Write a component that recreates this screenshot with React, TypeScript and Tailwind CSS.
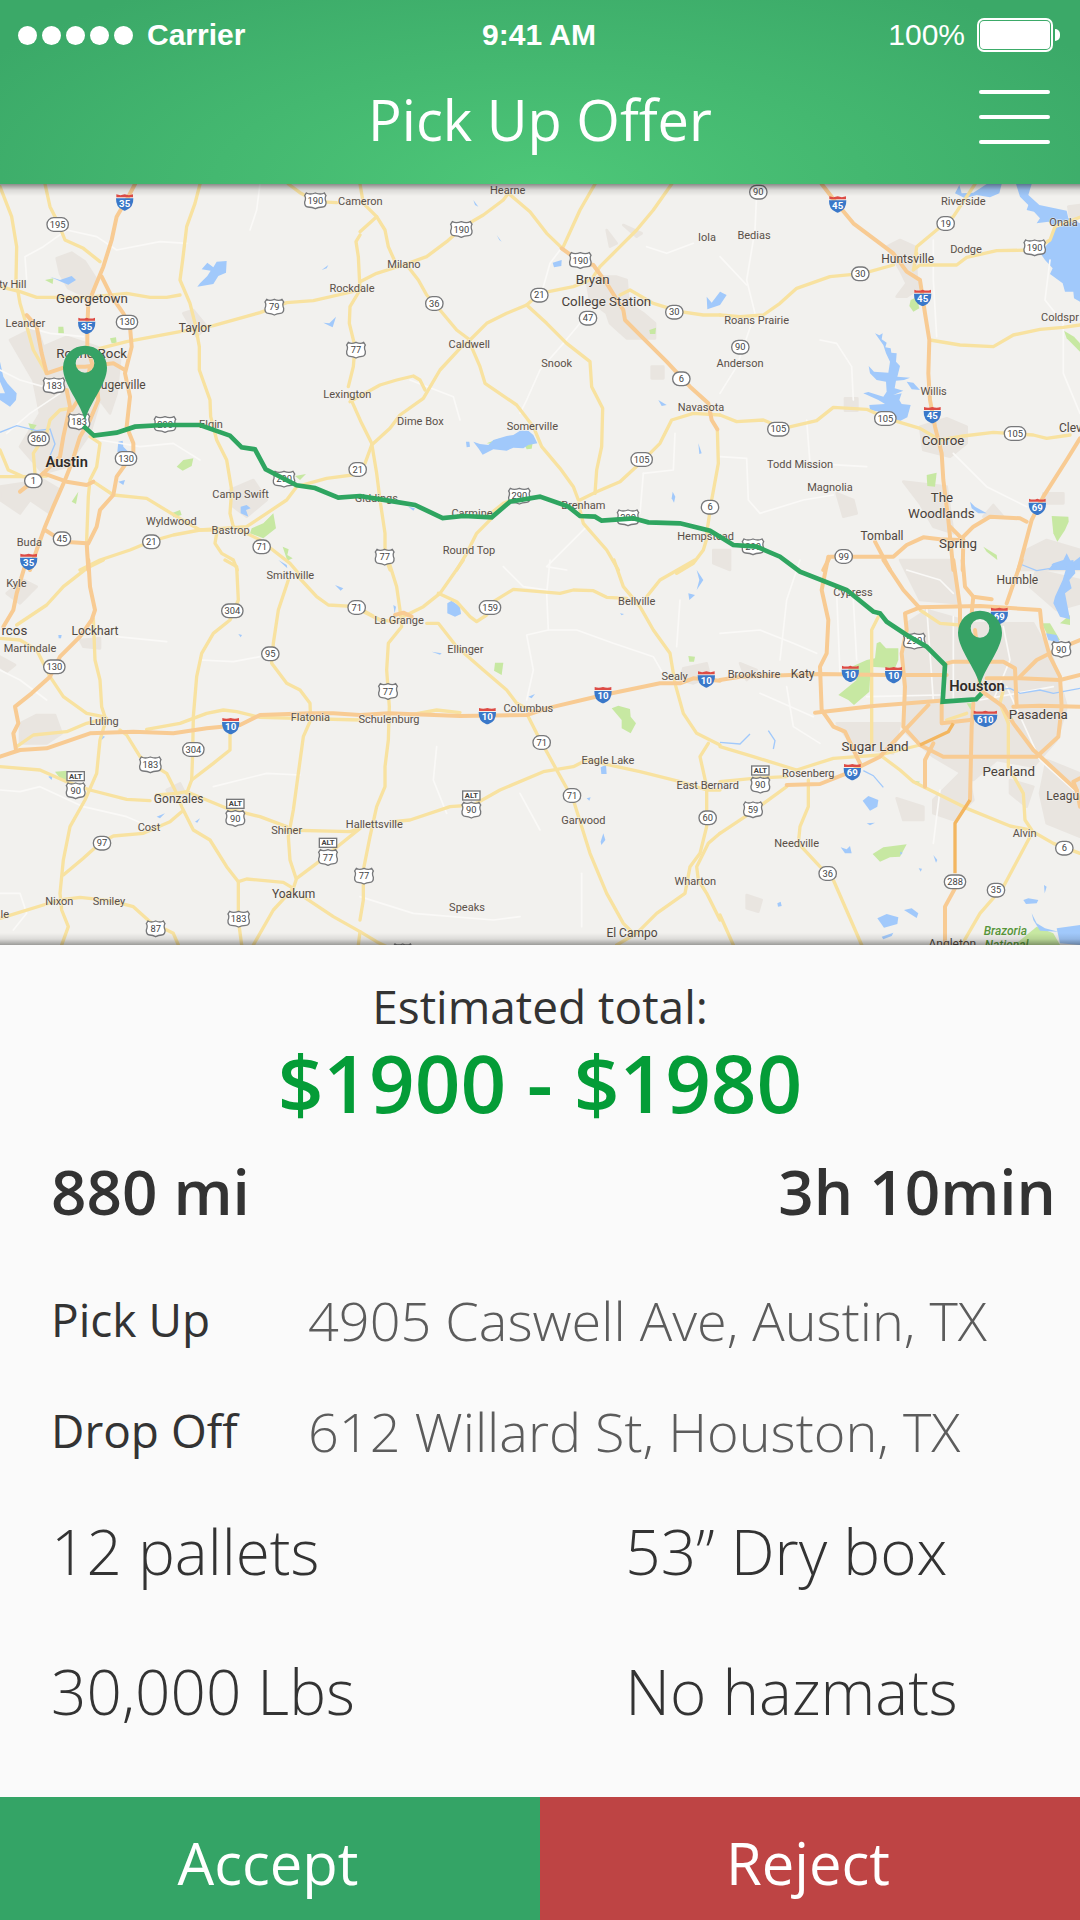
import React from "react";

type Shape = "oval" | "us" | "alt" | "interstate";
type Size = "s" | "m" | "l" | "xl";
type Anchor = "start" | "middle" | "end";
type Label = [string, number, number, Size?, Anchor?];
type Sign = [Shape, string, number, number];

interface Tile {
  x: number;
  y: number;
  urban: string[];
  parks: string[];
  water: string[];
  minor: string[];
  roads: string[];
  highways: string[];
  signs: Sign[];
  labels: Label[];
}

const TILES: Tile[] = [
  {
    x: 0,
    y: -12,
    urban: [
      "170,235 215,218 255,245 290,300 260,350 205,325 180,280",
      "30,480 110,440 130,500 200,470 290,500 360,540 350,640 330,700 300,660 270,760 200,860 130,880 60,800 120,700 100,600",
      "0,920 130,900 180,930 150,1000 90,960 60,1000 0,960",
      "690,930 760,900 800,960 740,1010 700,980",
      "550,400 580,390 620,440 590,470",
    ],
    parks: [
      "755,1045 790,1030 820,1000 828,1045 790,1075 750,1060",
      "135,300 160,295 158,312",
      "175,440 190,440 192,460 175,460",
      "85,730 110,735 95,757",
      "330,475 348,472 350,488 335,490",
      "530,860 550,840 580,835 575,858 548,872",
      "215,965 235,935 228,972",
      "515,1000 540,990 545,1005 520,1012",
      "848,1100 866,1108 862,1125 878,1135 862,1142",
      "885,888 918,882 900,900",
    ],
    water: [
      "605,268 622,248 640,262 650,245 680,243 678,278 655,288 640,312 592,320 600,310 622,288 632,272",
      "0,545 10,590 22,610 50,640 48,660 30,680 0,660 0,640 15,640 0,605",
      "150,290 180,300 215,288 228,300 205,314 185,306",
      "722,980 740,975 752,985 738,990 745,1010 722,1000",
      "355,785 368,782 370,800 385,815 372,825 352,815",
      "970,428 988,430 1008,410 998,442 985,436",
      "965,270 985,255 980,265",
      "355,905 375,900 370,915",
    ],
    minor: [
      "80,300 75,230 130,200 200,150 290,170 350,210 480,185 560,190",
      "750,150 770,90 780,12",
      "0,570 60,600 130,620",
      "300,780 420,800 520,790 600,840",
      "40,430 150,460 250,470",
      "20,760 90,700 180,640",
    ],
    roads: [
      "0,20 35,110 50,200 48,300 60,370 75,420 100,510 140,580",
      "0,320 60,335 110,352 260,352 380,340 450,352 500,352 540,345",
      "135,12 150,80 175,130 195,180 250,205 300,245",
      "600,12 585,70 560,140 548,240 540,300 570,370 585,430 598,500 598,570 630,660 632,710 650,780 680,840 695,930 690,1000 700,1040",
      "300,505 380,485 540,455 640,437 780,398 860,368 940,362 1080,330",
      "865,12 900,38 950,65 1010,68",
      "1080,165 1068,185 1075,230 1080,330 1050,380 1048,430 1065,500 1060,560 1045,620",
      "280,905 340,945 440,955 530,1010 600,1050 650,1050",
      "240,1170 300,1140 390,1110 450,1085 520,1065 600,1050 740,1040 800,1000 860,960 890,920 980,895 1080,882",
      "700,1040 780,1080 870,1150 900,1185",
      "650,1060 645,1090 665,1120 700,1140 712,1170",
      "0,810 25,870 70,890 140,888",
      "0,890 70,890",
      "210,685 180,690 150,720 140,760 100,820 105,880",
      "270,770 300,790 290,860 270,900 265,950 260,1080 265,1170",
    ],
    highways: [
      "405,12 385,50 350,110 335,180 310,260 285,320 265,370 262,440 262,500 290,600 295,660 270,720 240,770 215,850 195,900 160,980 135,1040 110,1110 90,1170",
      "305,290 335,350 370,400 390,440 395,500 375,580 390,650 380,740 400,790 400,820 350,890 340,945 300,990 290,1040 265,1090",
      "80,405 110,440 125,520 140,580 200,560 255,560 340,550 375,570",
      "200,630 210,680 190,770 180,830 130,880 60,935",
      "130,880 200,905 260,915 280,905",
      "135,1050 190,1085 260,1090 265,1170",
      "215,690 260,620 270,560",
    ],
    signs: [
      ["interstate", "35", 374, 67],
      ["interstate", "35", 260, 437],
      ["interstate", "35", 86, 1145],
      ["oval", "195", 173, 133],
      ["oval", "130", 381, 426],
      ["oval", "360", 116, 776],
      ["oval", "130", 378, 835],
      ["oval", "1", 100, 902],
      ["oval", "45", 186, 1076],
      ["oval", "21", 454, 1085],
      ["oval", "71", 785, 1100],
      ["oval", "21", 1073, 868],
      ["us", "190", 946, 62],
      ["us", "79", 823, 381],
      ["us", "77", 1068, 510],
      ["us", "183", 162, 617],
      ["us", "183", 237, 725],
      ["us", "290", 495, 733],
      ["us", "290", 852, 897],
    ],
    labels: [
      ["Cameron", 1081, 76],
      ["ty Hill", 79, 325, "s", "end"],
      ["Georgetown", 276, 370, "l"],
      ["Leander", 76, 441],
      ["Taylor", 585, 455, "m"],
      ["Rockdale", 1056, 336],
      ["Round Rock", 275, 534, "l"],
      ["Pflugerville", 437, 628, "m", "end"],
      ["Elgin", 633, 743],
      ["Austin", 200, 862, "xl"],
      ["Camp Swift", 722, 953],
      ["Wyldwood", 514, 1036],
      ["Bastrop", 692, 1062],
      ["Buda", 88, 1099],
      ["Lexington", 1042, 653],
    ],
  },
  {
    x: 1080,
    y: -12,
    urban: [
      "680,300 720,290 770,290 800,300 805,370 850,400 885,430 885,475 800,475 750,430 740,400 690,360",
      "740,150 770,190 750,200",
      "790,135 845,160 830,170",
      "875,560 910,560 910,595 875,595",
      "1060,1110 1110,1110 1110,1170 1060,1150",
    ],
    parks: ["495,797 518,788 515,806 500,808", "868,450 888,443 886,462 870,462", "380,790 420,775 400,792"],
    water: [
      "340,785 360,792 385,795 400,780 440,768 460,765 480,752 505,752 520,765 532,790 505,795 490,805 460,803 440,812 400,808 368,824 355,805",
      "318,785 328,785 330,800 320,802",
      "578,248 605,240 604,258 582,262",
      "1040,350 1055,368 1080,335 1100,345 1080,375 1042,388",
      "938,935 946,950 942,968 935,955",
      "410,165 425,185 418,180",
      "340,60 355,80 345,75",
      "895,660 920,675 905,678",
      "1015,790 1025,820 1018,822",
      "145,980 165,985 160,992",
    ],
    minor: [
      "620,1170 560,1160 680,1040",
      "660,430 610,490 540,570 500,660 480,700",
      "850,880 940,870 945,760",
      "840,1000 850,880",
      "600,210 570,250 550,320",
      "150,600 280,650 300,720",
      "860,200 920,220 1000,190",
    ],
    roads: [
      "0,12 10,70 50,110 75,150 85,200 105,245",
      "0,155 50,110",
      "0,305 50,280 130,255 200,230 260,185 310,140 370,105 430,60 445,40",
      "445,40 510,95 560,160 610,208",
      "705,12 660,90 610,200",
      "935,12 880,90 830,150 780,200 720,260 700,290",
      "140,255 175,300 200,345 240,390 290,450 330,480",
      "330,480 300,505 240,570 190,655 120,705 90,745 35,795 15,850",
      "-30,665 60,615 110,600 160,588 180,600 195,630",
      "330,480 380,430 440,400 500,375 540,340 640,320 690,300",
      "500,375 560,430 620,490 690,545 695,620 728,685 725,800 710,870 705,940",
      "330,490 360,560 375,610 470,675 520,740 545,800 600,865 640,920 655,960",
      "660,960 710,935 780,905 840,850 900,790 935,720 1000,700 1080,705",
      "780,345 810,330 880,370 960,395 1030,405 1080,405",
      "1072,748 1075,850 1055,960 1040,1060",
      "655,970 670,1030 740,1110 775,1170",
      "400,1010 350,1060 320,1120 290,1170",
      "380,1010 430,970 480,950",
      "1045,1060 1030,1110 1000,1150 950,1180",
      "-35,640 5,730 35,790 50,880 60,960 75,1060 75,1130 90,1170",
    ],
    highways: ["605,205 660,245 700,255 740,310 790,390 795,420 850,475 920,545 990,620 1045,670 1055,720 1072,748"],
    signs: [
      ["us", "190", 304, 148],
      ["us", "190", 661, 241],
      ["us", "290", 478, 948],
      ["us", "290", 804, 1013],
      ["us", "77", 74, 1131],
      ["oval", "36", 223, 370],
      ["oval", "21", 538, 345],
      ["oval", "47", 684, 414],
      ["oval", "30", 943, 396],
      ["oval", "6", 964, 596],
      ["oval", "105", 845, 838],
      ["oval", "6", 1050, 981],
    ],
    labels: [
      ["Giddings", 49, 967],
      ["Hearne", 443, 42],
      ["Milano", 132, 265],
      ["Caldwell", 328, 504],
      ["Snook", 590, 560],
      ["Dime Box", 181, 734],
      ["Somerville", 517, 750],
      ["Carmine", 336, 1010],
      ["Brenham", 670, 986],
      ["Round Top", 327, 1121],
      ["Bryan", 698, 313, "l"],
      ["College Station", 739, 377, "l"],
      ["Iola", 1041, 183],
      ["Navasota", 1023, 693],
      ["Hempstead", 1037, 1081],
    ],
  },
  {
    x: 2160,
    y: -12,
    urban: [
      "500,200 540,180 585,200 590,290 605,320 560,350 530,350 560,310 540,270",
      "600,740 680,715 740,740 740,790 690,830 610,810",
      "920,1110 980,1080 1080,1110 1080,1170 900,1170",
      "550,905 680,920 700,1060 640,1040 600,970",
      "375,655 412,655 412,692 375,692",
      "970,940 1030,940 1030,970 970,970",
      "350,940 400,960 410,1000 370,1010",
      "1045,80 1080,75 1080,110 1050,110",
      "790,1010 820,975 850,1010",
    ],
    parks: [
      "995,1008 1045,1010 1046,1025 1035,1050 1012,1085 1000,1060",
      "620,885 650,878 645,920 622,918",
      "1032,452 1062,470 1080,490 1080,515 1040,475",
      "572,360 590,352 598,385 580,395 568,378",
      "790,1100 830,1125 832,1140 800,1115",
    ],
    water: [
      "465,460 478,466 488,460 485,478 500,488 496,502 512,505 514,518 530,520 528,545 540,558 532,590 570,593 552,600 528,602 524,625 550,632 520,645 545,640 538,660 545,672 572,675 562,712 530,728 505,700 450,690 448,675 495,672 475,660 430,640 445,636 490,650 500,635 498,605 470,600 450,580 446,558 462,575 505,578 510,545 498,520 490,495",
      "888,12 935,12 925,45 958,75 1040,92 1045,115 1080,130 1080,365 1062,355 1060,335 1035,335 1028,310 990,282 998,265 975,240 960,218 985,190 1008,140 985,125 950,130 960,115 942,95 920,90 925,75 900,50",
      "560,605 580,608 600,630 575,628",
      "705,40 718,15 725,40 760,38 800,12 845,12 838,40 810,52 770,45 735,55",
      "750,965 765,980 800,1000 775,1000 755,985",
      "1000,1150 1030,1140 1040,1120 1055,1150 1080,1130 1080,1170 985,1170",
      "0,335 12,345 0,360",
    ],
    minor: [
      "110,40 105,150 80,300 105,400 50,560 0,640",
      "0,230 80,315",
      "300,480 350,490 395,560 400,660",
      "0,830 80,835 85,960 120,1000 250,960 340,945",
      "700,820 800,920 920,980",
      "990,240 975,360 1030,430 1030,580 1080,700",
      "650,470 640,300 640,180",
      "260,720 270,850 440,860",
    ],
    roads: [
      "0,405 60,410 130,405 180,370 230,325 330,290 430,280 520,255",
      "590,220 580,270 600,255 710,255 740,232 830,212 940,210 990,180 1005,140 1080,112",
      "765,12 740,50 700,110 650,150 590,200 585,240",
      "630,480 720,495 820,500 880,465 960,448 1030,442 1080,435",
      "0,705 50,725 130,720 190,745 290,722 340,682 440,688 500,715 600,745 660,780 730,768 820,757 940,765 980,775 1050,765",
    ],
    highways: [
      "305,12 350,70 400,130 520,220 560,275 600,300 615,400 628,480 625,580 630,660 645,740 665,820 670,900 685,1020 700,1170",
      "1080,775 1040,840 970,950 935,1020 895,1170",
      "310,1170 330,1130 380,1130 520,1130 560,1095 610,1072 660,1078 720,1080 760,1040 810,1010 900,1015 920,1025",
      "465,1085 510,1170",
      "730,1080 728,1170",
      "690,1040 730,1080",
    ],
    signs: [
      ["interstate", "45", 353, 73],
      ["interstate", "45", 608, 353],
      ["interstate", "45", 637, 705],
      ["interstate", "69", 952, 980],
      ["oval", "90", 115, 36],
      ["oval", "19", 677, 130],
      ["oval", "30", 421, 281],
      ["oval", "90", 61, 501],
      ["oval", "105", 175, 747],
      ["oval", "105", 496, 715],
      ["oval", "105", 885, 760],
      ["oval", "99", 371, 1129],
      ["us", "190", 944, 203],
      ["us", "290", 99, 1100],
    ],
    labels: [
      ["Riverside", 730, 76],
      ["Dodge", 738, 218],
      ["Huntsville", 563, 250, "m"],
      ["Bedias", 102, 176],
      ["Onala", 988, 139, "s", "start"],
      ["Roans Prairie", 110, 431],
      ["Coldspr", 963, 422, "s", "start"],
      ["Anderson", 60, 560],
      ["Willis", 641, 646],
      ["Clev", 1017, 757, "m", "start"],
      ["Conroe", 669, 796, "l"],
      ["Todd Mission", 240, 863],
      ["Magnolia", 330, 932],
      ["The", 666, 966, "l"],
      ["Woodlands", 664, 1013, "l"],
      ["Tomball", 486, 1080, "m"],
      ["Spring", 714, 1105, "l"],
    ],
  },
  {
    x: 0,
    y: 1128,
    urban: [
      "60,490 110,465 165,465 185,520 140,550 60,550",
      "0,290 45,315 20,335 0,320",
      "240,240 300,235 300,265 250,260",
      "500,690 540,670 560,710 520,720",
      "20,100 70,60 110,80 60,130",
    ],
    parks: ["165,635 200,632 200,662 180,655"],
    water: [
      "300,525 315,530 305,540",
      "470,770 495,760 480,775",
      "175,225 185,225 183,235 176,235",
      "145,650 158,645 155,660",
      "585,785 600,775 592,788",
      "715,222 726,225 722,232",
      "835,0 860,15 862,25",
      "1005,75 1030,85 1022,92",
    ],
    minor: [
      "0,330 60,360 140,420",
      "0,690 60,695 120,680 250,740 380,770 450,800",
      "600,300 700,305 780,290",
      "0,1000 60,1000 80,1060 40,1110",
      "640,680 800,640 900,645",
      "350,230 500,245",
    ],
    roads: [
      "310,0 260,25 190,80 140,135 50,195",
      "0,235 60,240 110,270 150,350 190,410 260,460 310,470",
      "280,175 285,300 300,360 305,440 318,480 300,540 290,640 255,720 210,800 190,900 180,1000 185,1050 205,1100 185,1155",
      "50,560 100,525 200,515 260,490 320,475",
      "360,510 380,525 420,590 450,610 500,640 525,690 545,740 580,810 630,840 680,920 715,965 715,1080 725,1155",
      "440,508 540,490 620,460 670,450 710,455 780,472 1080,480",
      "675,0 710,20 715,120 690,180 640,220 605,280 590,350 580,470 578,580 575,660 560,700",
      "690,510 690,570 640,610 575,660",
      "0,620 120,630 200,665 270,690 380,718 450,722",
      "470,705 530,700 560,695 620,720 680,745 780,770 860,800",
      "850,810 1050,815 1080,805",
      "865,60 835,150 820,250 815,310 860,370 900,390 930,430 932,480 910,530 895,640 880,750 865,830 870,900 888,955",
      "545,755 510,785 430,820 340,828 300,850 250,895 190,945",
      "0,1075 130,1035 180,1020 240,1012 330,1022 400,1040 450,1085 520,1120 535,1155",
      "715,965 740,957 850,967 880,985 820,1050 760,1155",
      "880,985 890,955 950,910 1000,870 1080,805",
      "910,1010 1000,1070 1080,1115 1075,1155",
      "890,45 950,110 985,135 1070,140 1140,180",
    ],
    highways: [
      "80,0 50,100 40,150 10,200",
      "265,0 270,80 285,150 275,180 240,230 180,290 150,350 95,400 45,440 55,490 40,520 48,570",
      "0,590 60,570 140,565 270,520 400,515 520,520 620,505 720,495 780,465 930,460 1000,460 1080,465",
    ],
    signs: [
      ["interstate", "10", 692, 498],
      ["oval", "130", 163, 320],
      ["oval", "304", 697, 152],
      ["oval", "304", 580, 568],
      ["oval", "95", 811, 281],
      ["oval", "71", 1070, 142],
      ["oval", "97", 306, 849],
      ["us", "183", 451, 614],
      ["us", "183", 716, 1077],
      ["us", "87", 467, 1106],
      ["alt", "90", 227, 692],
      ["alt", "90", 706, 775],
      ["alt", "77", 984, 892],
    ],
    labels: [
      ["Kyle", 49, 82],
      ["rcos", 82, 226, "l", "end"],
      ["Lockhart", 285, 226, "m"],
      ["Martindale", 90, 275],
      ["Luling", 312, 494],
      ["Smithville", 871, 57],
      ["Flatonia", 931, 483],
      ["Gonzales", 536, 729, "m"],
      ["Cost", 447, 812],
      ["Shiner", 860, 822],
      ["Yoakum", 881, 1013, "m"],
      ["Nixon", 178, 1036],
      ["Smiley", 327, 1034],
      ["le", 27, 1074, "s", "end"],
    ],
  },
  {
    x: 1080,
    y: 1128,
    urban: ["970,325 1040,310 1050,350 1000,370 960,360"],
    parks: [
      "755,445 775,437 810,447 812,470 828,490 812,520 785,505 785,480",
      "405,308 430,308 425,345 402,332",
      "985,288 1005,290 1002,305 988,305",
    ],
    water: [
      "262,130 275,122 300,140 303,162 285,170 262,160",
      "722,622 738,614 740,642 724,642",
      "730,820 736,840 724,855 722,845",
      "215,275 245,280 240,284",
      "505,410 525,402 515,415",
      "680,715 692,712 688,722",
      "985,100 1005,105 988,120",
      "1010,30 1030,60 1010,90 1018,60",
      "100,135 108,140 104,160",
      "780,160 792,162 785,166",
    ],
    minor: [
      "570,0 560,100 565,210 500,225 520,330 500,420",
      "565,210 650,210 760,250 880,290 920,360",
      "430,20 490,80 560,90",
      "960,120 950,260",
      "230,560 220,660 260,760",
      "480,700 540,810",
      "0,1010 160,1060 400,1080 480,1070",
      "665,940 665,1100",
    ],
    roads: [
      "0,150 60,180 110,185",
      "85,0 110,80 120,150 125,200 85,250 80,330 88,440 85,540 75,620 75,680 50,740 30,830 10,930 10,1020 0,1080",
      "310,0 240,100 190,140 120,175",
      "235,100 290,125 330,170 350,185 380,165 400,125 460,88 600,100 640,90 700,92 740,112 800,115",
      "200,190 235,190 290,260 370,330 440,390 470,430 520,455",
      "505,470 530,520 590,630 640,720 690,880 740,1000 790,1090 820,1120",
      "762,0 790,80 840,140 880,210 930,280 945,370 970,460 1010,520 1080,555",
      "1005,0 900,60 860,110",
      "100,785 150,780 270,740 340,735 420,690 550,635 640,620 680,600",
      "680,600 840,635 960,665 1040,690 1080,690",
      "1045,550 1020,590 1040,680 1040,800 1020,880 990,920 975,1000 890,1060 830,1120 770,1155",
      "1080,820 1045,850 1010,920 1015,960 1040,1000 1080,1080",
      "150,465 230,450 300,458",
      "0,1115 50,1145 80,1160",
    ],
    highways: ["0,465 85,460 300,468 500,465 560,445 730,405 900,370 960,370 1000,355 1080,362", "105,165 130,158 155,170"],
    signs: [
      ["oval", "159", 390, 142],
      ["oval", "71", 545, 547],
      ["oval", "71", 636, 706],
      ["oval", "60", 1043, 773],
      ["us", "77", 84, 394],
      ["us", "77", 12, 948],
      ["us", "90", 128, 1175],
      ["alt", "90", 334, 750],
      ["interstate", "10", 382, 468],
      ["interstate", "10", 729, 405],
      ["interstate", "10", 1039, 358],
    ],
    labels: [
      ["Schulenburg", 87, 489],
      ["Hallettsville", 43, 803],
      ["Bellville", 830, 135],
      ["La Grange", 117, 193],
      ["Ellinger", 316, 280],
      ["Sealy", 944, 360],
      ["Columbus", 505, 456],
      ["Eagle Lake", 744, 611],
      ["East Bernard", 1043, 687],
      ["Garwood", 670, 793],
      ["Wharton", 1006, 976],
      ["Speaks", 321, 1052],
      ["El Campo", 816, 1131, "m"],
    ],
  },
  {
    x: 2160,
    y: 1128,
    urban: [
      "560,190 620,150 760,190 940,190 1000,300 1040,440 1010,540 940,620 830,600 760,660 640,590 560,520 550,350",
      "640,720 740,620 760,720 700,780 640,760",
      "980,600 1080,640 1080,830 980,790 960,700",
      "350,490 540,490 520,580 400,560",
      "540,0 700,0 720,130 600,120",
      "870,660 940,680 920,740 870,700",
      "60,310 110,330 80,360",
      "80,1005 125,1020 115,1055 80,1045",
      "950,30 1080,60 1080,130 1010,150 930,80",
      "530,715 610,740 610,780 550,780",
      "1040,660 1080,640 1080,700",
    ],
    parks: [
      "470,250 480,245 498,265 535,265 535,300 525,325 452,320 448,395 402,435 385,420 355,405 410,360 385,345 385,325 440,300 465,295",
      "458,882 490,862 560,853 540,890 510,892 480,905",
      "895,1145 950,1100 1000,1120 1020,1155 890,1155",
      "965,190 990,190 1020,240 990,240",
      "1020,190 1050,165 1050,195",
      "570,660 600,665 590,675",
      "740,430 755,430 752,450",
    ],
    water: [
      "995,12 1060,0 1066,40 1048,60 1055,85 1035,100 1050,178 1020,170 1000,130 1005,110 1028,60 1040,20 1000,28",
      "428,722 445,708 475,720 472,740 450,752",
      "472,1075 500,1062 535,1072 532,1092 492,1103",
      "552,1050 575,1045 595,1060 590,1074",
      "362,862 380,868 390,858 395,880 375,880",
      "1010,1105 1080,1095 1080,1155 1020,1150",
      "978,220 1010,225 1020,250 985,240",
      "640,885 652,900 648,908",
      "172,1030 182,1025 185,1038 174,1040",
      "485,1130 520,1118 515,1128 490,1138",
      "440,790 465,788 450,796",
      "910,1020 925,1015 955,1020 950,1030 918,1032",
      "972,975 980,980 974,1000",
      "935,1060 950,1090 975,1105 1015,1115 960,1112 940,1080",
      "540,875 548,878 542,885",
      "596,925 606,926 602,935",
    ],
    minor: [
      "0,220 120,210 220,250 290,280",
      "240,0 200,120 180,300",
      "350,100 360,340",
      "400,120 410,300",
      "200,380 220,500 300,550",
      "560,30 660,60 700,100",
      "620,140 640,420",
      "700,170 700,420",
      "860,380 960,600 1060,690",
      "780,420 1000,380",
      "440,410 660,405",
      "660,690 640,850",
      "120,400 280,470",
      "850,200 870,300 820,420",
    ],
    roads: [
      "455,560 455,210 475,170",
      "600,150 660,190 720,195",
      "0,560 100,590 230,630",
      "230,630 340,595 480,585 540,630 580,665 740,745 870,798 930,810 1000,850 1080,880",
      "0,820 90,760 200,680",
      "0,665 100,655 200,650",
      "265,660 265,740 240,800 235,850 300,920 340,960 425,1155",
      "865,490 865,620 910,700 915,780 935,810",
      "930,830 850,980 780,1060 725,1155",
      "0,1065 40,1155",
      "480,585 600,555",
      "850,390 840,430 865,490",
      "680,480 740,460",
    ],
    highways: [
      "325,-10 305,90 325,180 320,280 300,320 305,450 340,500 375,515 410,590 420,610",
      "490,0 550,90 600,145",
      "700,0 720,140 720,200",
      "728,0 735,80 760,110 815,118",
      "760,110 755,160",
      "905,0 860,130",
      "600,142 780,138 960,150 965,200 990,290 1020,350 1025,440 1015,530 950,590 670,590 600,555 550,500 555,380 545,280 560,210 555,160 600,142",
      "0,360 60,350 300,342 500,345 680,345",
      "285,458 460,438 660,422",
      "680,310 700,305 850,305 885,325 890,440",
      "665,420 665,490 750,480",
      "800,355 900,355 1020,360 1080,345",
      "900,350 950,300 1020,265 1080,240",
      "780,390 850,440 880,490 940,570 1070,690 1080,740",
      "1070,690 1060,665 1080,655",
      "200,675 300,672 380,640 480,590 550,515 625,435",
      "760,430 755,500 750,720",
      "705,985 675,1040 675,1155",
      "880,440 960,437 1080,440",
      "640,550 615,600 615,680",
      "765,210 775,300 780,390",
    ],
    signs: [
      ["interstate", "10", 391, 341],
      ["interstate", "10", 521, 345],
      ["interstate", "69", 838, 167],
      ["interstate", "610", 796, 476],
      ["interstate", "69", 397, 636],
      ["us", "290", 583, 243],
      ["us", "90", 1024, 268],
      ["us", "59", 99, 749],
      ["alt", "90", 121, 675],
      ["oval", "36", 323, 940],
      ["oval", "288", 705, 965],
      ["oval", "35", 828, 990],
      ["oval", "6", 1033, 864],
    ],
    labels: [
      ["Humble", 892, 73, "m"],
      ["Cypress", 399, 108],
      ["Brookshire", 102, 353],
      ["Katy", 248, 353, "m"],
      ["Houston", 771, 393, "xl"],
      ["Pasadena", 955, 478, "l"],
      ["Sugar Land", 465, 573, "l"],
      ["Pearland", 866, 648, "l"],
      ["Rosenberg", 265, 651],
      ["Needville", 230, 860],
      ["Alvin", 914, 832],
      ["Leagu", 979, 721, "m", "start"],
      ["Angleton", 697, 1164, "m"],
    ],
  },
];

const ROUTE =
  "250,726 282,755 350,746 405,728 490,723 600,723 690,755 725,790 765,796 797,856 890,904 945,912 1015,941 1080,936 1165,950 1245,963 1328,1002 1390,996 1475,1000 1530,953 1620,938 1705,968 1740,996 1785,998 1805,1010 1900,1003 1945,1015 2040,1018 2130,1040 2160,1058 2200,1083 2270,1088 2340,1118 2400,1163 2540,1218 2620,1283 2640,1288 2660,1313 2720,1353 2780,1388 2835,1443 2828,1553 2928,1546 2945,1528";

const LABEL_STYLE: Record<Size, string> = {
  s: "text-[33px] fill-[#5a5048]",
  m: "text-[36px] fill-[#514840]",
  l: "text-[40px] fill-[#49413a]",
  xl: "text-[44px] font-semibold fill-[#2f2b29]",
};

const ANCHOR: Record<Anchor, string> = {
  start: "[text-anchor:start]",
  middle: "[text-anchor:middle]",
  end: "[text-anchor:end]",
};

function UsShield({ text }: { text: string }) {
  const w = text.length > 2 ? 32 : 28;
  return (
    <>
      <path
        d={`M${-w + 5},-23 Q${-w / 2},-17 0,-23 Q${w / 2},-17 ${w - 5},-23 L${w},-15 Q${w - 5},-8 ${w},4 Q${w + 1},18 ${w - 10},19 Q8,20 0,24 Q-8,20 ${-w + 10},19 Q${-w - 1},18 ${-w},4 Q${-w + 5},-8 ${-w},-15 Z`}
        className="fill-white stroke-[#77787a] stroke-4"
      />
      <text y="10" className="fill-[#444] text-[28px] [text-anchor:middle]">
        {text}
      </text>
    </>
  );
}

function RoadSign({ sign: [shape, text, x, y] }: { sign: Sign }) {
  if (shape === "oval") {
    const w = text.length > 2 ? 64 : 52;
    return (
      <g transform={`translate(${x} ${y})`}>
        <rect x={-w / 2} y={-20} width={w} height={41} rx={20} className="fill-white stroke-[#77787a] stroke-4" />
        <text y="10" className="fill-[#444] text-[28px] [text-anchor:middle]">
          {text}
        </text>
      </g>
    );
  }
  if (shape === "interstate") {
    const w = text.length > 2 ? 36 : 26;
    return (
      <g transform={`translate(${x} ${y})`}>
        <path
          d={`M${-w + 1},-24 Q${-w / 2},-19 0,-24 Q${w / 2},-19 ${w - 1},-24 L${w - 1},-15 H${-w + 1} Z`}
          className="fill-[#dd4b45]"
        />
        <path
          d={`M${-w},-12 H${w} Q${w + 1},16 4,24 Q0,26 -4,24 Q${-w - 1},16 ${-w},-12 Z`}
          className="fill-[#3a78c9]"
        />
        <text y="13" className="fill-white text-[29px] font-bold [text-anchor:middle]">
          {text}
        </text>
      </g>
    );
  }
  return (
    <g transform={`translate(${x} ${y})`}>
      {shape === "alt" && (
        <>
          <rect x={-26} y={-57} width={52} height={27} className="fill-white stroke-[#77787a] stroke-4" />
          <text y="-36" className="fill-[#444] text-[23px] font-bold [text-anchor:middle]">
            ALT
          </text>
        </>
      )}
      <UsShield text={text} />
    </g>
  );
}

function Pin({ x, y }: { x: number; y: number }) {
  return (
    <path
      transform={`translate(${x} ${y})`}
      fillRule="evenodd"
      d="M0,160 C-10,110 -66,50 -66,0 A66,66 0 0 1 66,0 C66,50 10,110 0,160 Z M0,-41 A28,28 0 1 0 0,15 A28,28 0 1 0 0,-41 Z"
      className="fill-[#36a265]"
    />
  );
}

function RouteMap() {
  const at = (t: Tile) => `translate(${t.x} ${t.y})`;
  return (
    <svg
      viewBox="0 0 3240 2283"
      className="block h-auto w-full font-[Roboto,sans-serif]"
      role="img"
      aria-label="Route from Austin to Houston"
    >
      <defs>
        <linearGradient id="shade-top" x1="0" y1="0" x2="0" y2="1">
          <stop offset="0" stopColor="#000" stopOpacity="0.42" />
          <stop offset="0.5" stopColor="#000" stopOpacity="0.1" />
          <stop offset="1" stopColor="#000" stopOpacity="0" />
        </linearGradient>
        <linearGradient id="shade-bottom" x1="0" y1="1" x2="0" y2="0">
          <stop offset="0" stopColor="#000" stopOpacity="0.36" />
          <stop offset="0.5" stopColor="#000" stopOpacity="0.09" />
          <stop offset="1" stopColor="#000" stopOpacity="0" />
        </linearGradient>
      </defs>
      <rect width="3240" height="2283" className="fill-[#f2f1ee]" />
      {TILES.map((t, i) => (
        <g key={i} transform={at(t)} strokeLinejoin="round" strokeLinecap="round">
          <g className="fill-[#e9e5e0] stroke-[#e9e5e0] stroke-8">
            {t.urban.map((p) => (
              <polygon key={p} points={p} />
            ))}
          </g>
          <g className="fill-[#c7e8a2]">
            {t.parks.map((p) => (
              <polygon key={p} points={p} />
            ))}
          </g>
          <g className="fill-[#a1c9fb]">
            {t.water.map((p) => (
              <polygon key={p} points={p} />
            ))}
          </g>
          <g className="fill-none stroke-[#faf9f7] stroke-5">
            {t.minor.map((p) => (
              <polyline key={p} points={p} />
            ))}
          </g>
        </g>
      ))}
      <g className="fill-none stroke-[#a1c9fb] stroke-4">
        <polyline points="0,745 50,725 110,740 150,735 165,780 150,815" />
        <polyline points="2980,1518 3030,1513 3060,1528 3120,1518 3160,1528 3240,1513" />
        <polyline points="2160,1675 2220,1680 2250,1650" />
        <polyline points="2305,1640 2325,1670 2320,1695" />
        <polyline points="2590,1760 2620,1775 2650,1810" />
        <polyline points="3060,1140 3110,1160 3170,1150" />
      </g>
      {TILES.map((t, i) => (
        <g key={i} transform={at(t)} fill="none" strokeLinejoin="round" strokeLinecap="round">
          <g className="stroke-[#f8e2a0] stroke-10">
            {t.roads.map((p) => (
              <polyline key={p} points={p} />
            ))}
          </g>
        </g>
      ))}
      {TILES.map((t, i) => (
        <g key={i} transform={at(t)} fill="none" strokeLinejoin="round" strokeLinecap="round">
          <g className="stroke-[#f8cb93] stroke-12">
            {t.highways.map((p) => (
              <polyline key={p} points={p} />
            ))}
          </g>
        </g>
      ))}
      <g className="fill-none stroke-[#f3b660] stroke-10">
        <polyline points="2910,1848 2865,1918 2865,2068" />
        <polyline points="2760,1683 2845,1643 2860,1618" />
      </g>
      {TILES.map((t, i) => (
        <g key={i} transform={at(t)}>
          {t.signs.map((s) => (
            <RoadSign key={s.join()} sign={s} />
          ))}
          {t.labels.map(([text, x, y, size = "s", anchor = "middle"]) => (
            <text
              key={text}
              x={x}
              y={y}
              className={`${LABEL_STYLE[size]} ${ANCHOR[anchor]} stroke-[#f2f1ee]/60 stroke-4 [paint-order:stroke]`}
            >
              {text}
            </text>
          ))}
        </g>
      ))}
      <g className="fill-[#57963a] text-[36px] font-medium italic [text-anchor:middle]">
        <text x="3016" y="2253">
          Brazoria
        </text>
        <text x="3020" y="2294">
          National
        </text>
      </g>
      <polyline points={ROUTE} className="fill-none stroke-[#2fa560] stroke-14" />
      <Pin x={255} y={551} />
      <Pin x={2940} y={1346} />
      <rect width="3240" height="36" fill="url(#shade-top)" />
      <rect y="2247" width="3240" height="36" fill="url(#shade-bottom)" />
    </svg>
  );
}

function StatusBar() {
  return (
    <div className="grid grid-cols-3 items-center pt-4 pr-5 pl-[18px] font-['Liberation_Sans',Arial,sans-serif] text-[30px] leading-[38px] font-bold">
      <div className="flex items-center gap-[14px]">
        <div className="flex gap-[5px]" aria-label="Signal strength">
          {[0, 1, 2, 3, 4].map((n) => (
            <span key={n} className="size-[19px] rounded-full bg-white" />
          ))}
        </div>
        <span>Carrier</span>
      </div>
      <span className="text-center">9:41 AM</span>
      <div className="flex items-center justify-end">
        <span className="mr-3 font-normal">100%</span>
        <span className="h-[34px] w-[76px] rounded-[7px] border-2 border-white p-px">
          <span className="block h-full rounded-[4px] bg-white" />
        </span>
        <span className="ml-[2px] h-3 w-[5px] rounded-r-full bg-white" />
      </div>
    </div>
  );
}

export default function App() {
  return (
    <div className="flex min-h-screen flex-col bg-[#fafafa] font-['Open_Sans',sans-serif] text-[#333]">
      <header className="h-[184px] bg-[radial-gradient(ellipse_60%_130%_at_50%_100%,#4dc778,#3ba968)] text-white">
        <StatusBar />
        <div className="grid grid-cols-[1fr_auto_1fr] px-[30px] pt-6">
          <h1 className="col-start-2 text-[56px] leading-[82px] font-normal">Pick Up Offer</h1>
          <button
            type="button"
            aria-label="Menu"
            className="mt-3 flex w-[71px] flex-col gap-[21px] self-start justify-self-end"
          >
            <span className="h-1 rounded-full bg-white" />
            <span className="h-1 rounded-full bg-white" />
            <span className="h-1 rounded-full bg-white" />
          </button>
        </div>
      </header>

      <RouteMap />

      <main className="pt-7 pr-6 pb-10 pl-[51px]">
        <section className="pr-[27px] text-center">
          <h2 className="text-[46px] leading-[66px] font-normal">Estimated total:</h2>
          <p className="text-[80px] leading-[86px] font-semibold text-[#049c37]">$1900 - $1980</p>
        </section>
        <div className="mt-6 flex justify-between text-[62px] leading-[84px] font-semibold">
          <span>880 mi</span>
          <span>3h 10min</span>
        </div>
        <dl className="mt-[45px] grid grid-cols-[257px_1fr] items-center gap-y-[29px] leading-[80px]">
          <dt className="text-[46px]">Pick Up</dt>
          <dd className="pt-[2px] text-[54px] font-light text-[#5c5c5c]">4905 Caswell Ave, Austin, TX</dd>
          <dt className="text-[46px]">Drop Off</dt>
          <dd className="pt-[2px] text-[54px] font-light text-[#5c5c5c]">612 Willard St, Houston, TX</dd>
        </dl>
        <ul className="mt-[38px] grid grid-cols-[4fr_3fr] gap-y-14 text-[62px] leading-[84px] font-light">
          <li>12 pallets</li>
          <li>53” Dry box</li>
          <li>30,000 Lbs</li>
          <li>No hazmats</li>
        </ul>
      </main>

      <footer className="mt-auto grid grid-cols-2 text-[58px] leading-[115px] text-white">
        <button type="button" className="bg-[#34a466] pt-2 pr-1">
          Accept
        </button>
        <button type="button" className="bg-[#be4444] pt-2 pr-1">
          Reject
        </button>
      </footer>
    </div>
  );
}
